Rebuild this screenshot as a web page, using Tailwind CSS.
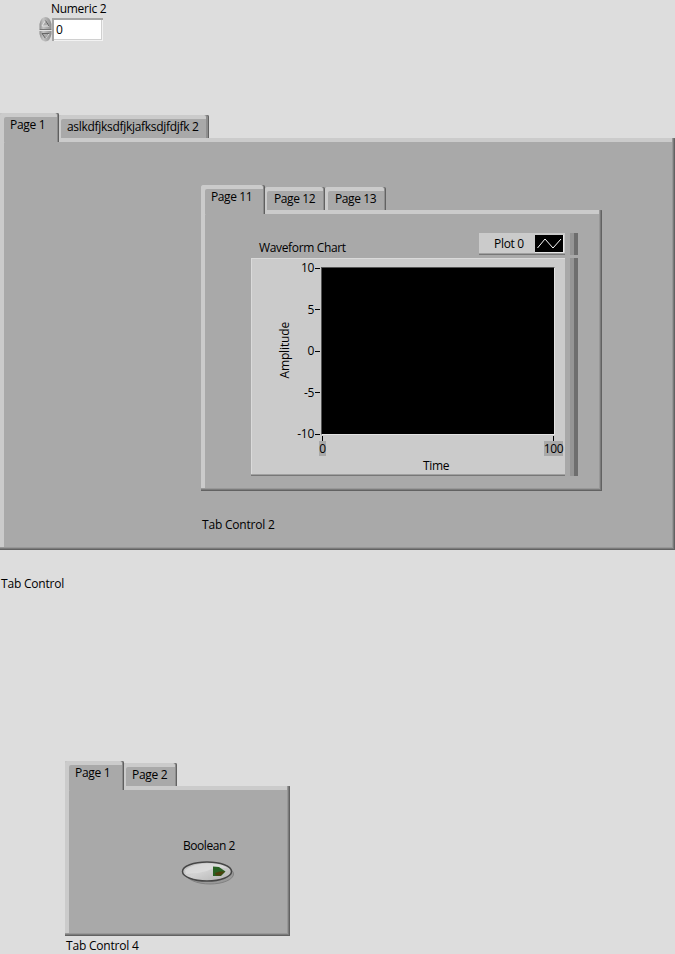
<!DOCTYPE html>
<html lang="en">
<head>
<meta charset="utf-8">
<title>Front Panel</title>
<script src="https://cdn.jsdelivr.net/npm/@tailwindcss/browser@4"></script>
</head>
<body class="w-[675px] h-[954px] overflow-hidden bg-[#dddddd] text-black text-[12px] leading-4 tracking-[-0.3px] whitespace-nowrap font-['Open_Sans','Noto_Sans',sans-serif]">

<!-- Numeric control -->
<section class="h-[113px] pl-[39px]">
  <div class="pl-3 pt-px h-[17px]">Numeric 2</div>
  <div class="flex h-[25px]">
    <svg class="w-[13px] h-[25px]" viewBox="0 0 13 25">
      <defs><linearGradient id="knob"><stop offset="0" stop-color="#8d8d8d"/><stop offset=".3" stop-color="#c4c4c4"/><stop offset=".65" stop-color="#a8a8a8"/><stop offset="1" stop-color="#8c8c8c"/></linearGradient></defs>
      <path d="M.5 12V7Q2 0 6.500 0Q11 0 12.500 7V12Z" fill="url(#knob)"/>
      <path d="M.5 14V17Q2 24.500 6.500 24.500Q11 24.500 12.500 17V14Z" fill="url(#knob)"/>
      <path d="M.5 12.500H12.500" stroke="#777"/><path d="M1 13.500H12.500" stroke="#e2e2e2"/>
      <path d="M3 9L6.500 3.500L10 9Z" fill="#aaa" stroke="#e4e4e4"/><path d="M6.500 3.500L10 9" stroke="#555"/>
      <path d="M3 16.500H10L6.500 21.500Z" fill="#aaa" stroke="#666"/><path d="M10 17L6.500 21.500" stroke="#e4e4e4"/>
    </svg>
    <div class="mt-px w-[51px] h-[23px] bg-white pl-[4px] pt-[4px] shadow-[inset_2px_2px_#a4a4a4,inset_-1px_-1px_#f2f2f2,inset_-2px_-2px_#d0d0d0]">0</div>
  </div>
</section>

<!-- Outer tab control -->
<section class="h-[436px]">
  <div class="flex h-[25px]">
    <div class="relative z-10 w-[59px] h-[29px] rounded-t-[2px] bg-[#a9a9a9] pl-[10px] pt-[4px] shadow-[inset_-1px_0_#5f5f5f,inset_-2px_0_#8c8c8c,inset_4px_4px_#cbcbcb]">Page 1</div>
    <div class="mt-[2px] w-[150px] h-[23px] rounded-t-[2px] bg-[#a9a9a9] pl-[8px] pt-[4px] shadow-[inset_-1px_0_#626262,inset_-3px_0_#8e8e8e,inset_2px_4px_#cbcbcb]">aslkdfjksdfjkjafksdjfdjfk 2</div>
  </div>
  <div class="h-[412px] rounded-t-[1px] bg-[#a9a9a9] pl-[201px] pt-[47px] shadow-[inset_-1px_-1px_#626262,inset_-2px_-2px_#7b7b7b,inset_-3px_-3px_#989898,inset_4px_4px_#cbcbcb]">

    <!-- Inner tab control -->
    <div class="flex h-[25px]">
      <div class="relative z-10 w-[64px] h-[29px] rounded-t-[2px] bg-[#a9a9a9] pl-[10px] pt-[4px] tracking-[-0.4px] shadow-[inset_-1px_0_#5f5f5f,inset_-2px_0_#8c8c8c,inset_4px_4px_#cbcbcb]">Page 11</div>
      <div class="mt-[2px] w-[60px] h-[23px] rounded-t-[2px] bg-[#a9a9a9] pl-[9px] pt-[4px] tracking-[-0.4px] shadow-[inset_-1px_0_#626262,inset_-2px_0_#8e8e8e,inset_2px_4px_#cbcbcb]">Page 12</div>
      <div class="mt-[2px] w-[61px] h-[23px] rounded-t-[2px] bg-[#a9a9a9] pl-[10px] pt-[4px] tracking-[-0.4px] shadow-[inset_-1px_0_#626262,inset_-2px_0_#8e8e8e,inset_3px_4px_#cbcbcb]">Page 13</div>
    </div>
    <div class="w-[401px] h-[281px] rounded-t-[1px] bg-[#a9a9a9] pl-[50px] pt-[23px] shadow-[inset_-1px_-1px_#626262,inset_-2px_-2px_#7b7b7b,inset_-3px_-3px_#989898,inset_4px_4px_#cbcbcb]">
      <div class="flex justify-between w-[327px] h-[25px]">
        <div class="pl-[8px] pt-[7px] tracking-[-0.35px]">Waveform Chart</div>
        <div class="flex w-[99px] h-[22px]">
          <div class="flex w-[86px] bg-[#cbcbcb] pl-[15px] shadow-[inset_0_-1px_#777,inset_0_-2px_#a0a0a0]">
            <span class="w-[41px] pt-[3px]">Plot 0</span>
            <svg class="mt-[2px] w-[29px] h-[18px]" viewBox="0 0 29 18"><path d="M0 0H28V17H0Z" fill="#000"/><path d="M28.500 0V17.500H0" fill="none" stroke="#e8e8e8"/><path d="M2.500 13L10 4L18 13L26 4" fill="none" stroke="#fff"/></svg>
          </div>
          <div class="w-[5px] bg-[#a8a8a8]"></div><div class="w-[4px] bg-[#959595]"></div><div class="w-[4px] bg-[#6e6e6e]"></div>
        </div>
      </div>

      <!-- Chart frame -->
      <div class="flex w-[327px] h-[218px]">
        <div class="w-[314px] bg-[#cbcbcb] pt-[9px] shadow-[inset_0_-1px_#777,inset_0_-2px_#a0a0a0,inset_1px_1px_#dadada]">
          <div class="flex h-[167px]">
            <div class="w-[42px] flex items-center justify-end"><span class="[writing-mode:vertical-rl] rotate-180 tracking-[-0.15px]">Amplitude</span></div>
            <div class="w-[27px] mr-px h-[182px] -mt-[7px] flex flex-col justify-between text-right">
              <div class="flex items-center justify-end gap-px"><span>10</span><i class="w-[5px] h-px bg-black"></i></div>
              <div class="flex items-center justify-end gap-px"><span>5</span><i class="w-[5px] h-px bg-black"></i></div>
              <div class="flex items-center justify-end gap-px"><span>0</span><i class="w-[5px] h-px bg-black"></i></div>
              <div class="flex items-center justify-end gap-px"><span>-5</span><i class="w-[5px] h-px bg-black"></i></div>
              <div class="flex items-center justify-end gap-px"><span>-10</span><i class="w-[5px] h-px bg-black"></i></div>
            </div>
            <div class="w-[234px] h-[168px] bg-black border border-t-[#555] border-l-[#555] border-r-[#e4e4e4] border-b-[#e4e4e4]"></div>
          </div>
          <div class="flex justify-between pl-[68px] pr-[2px] pt-[2px] h-[24px]">
            <div class="w-[7px] flex flex-col items-center"><i class="w-px h-[5px] bg-black"></i><span class="w-[7px] h-[15px] leading-[15px] bg-[#a9a9a9] flex justify-center">0</span></div>
            <div class="w-[19px] flex flex-col items-center"><i class="w-px h-[5px] bg-black"></i><span class="w-[19px] h-[15px] leading-[15px] bg-[#a9a9a9] flex justify-center">100</span></div>
          </div>
          <div class="pl-[172px]">Time</div>
        </div>
        <div class="w-[5px] bg-[#a8a8a8]"></div><div class="w-[4px] bg-[#959595]"></div><div class="w-[4px] bg-[#6e6e6e]"></div>
      </div>
    </div>
    <div class="pl-px pt-[26px] tracking-[-0.2px]">Tab Control 2</div>
  </div>
</section>

<div class="h-[212px] pt-[27px] pl-px tracking-[-0.2px]">Tab Control</div>

<!-- Lower tab control -->
<section class="pl-[65px]">
  <div class="flex h-[25px]">
    <div class="relative z-10 w-[59px] h-[29px] rounded-t-[2px] bg-[#a9a9a9] pl-[10px] pt-[4px] shadow-[inset_-1px_0_#5f5f5f,inset_-2px_0_#8c8c8c,inset_4px_4px_#cbcbcb]">Page 1</div>
    <div class="mt-[2px] w-[53px] h-[23px] rounded-t-[2px] bg-[#a9a9a9] pl-[8px] pt-[4px] shadow-[inset_-1px_0_#626262,inset_-2px_0_#8e8e8e,inset_2px_4px_#cbcbcb]">Page 2</div>
  </div>
  <div class="w-[225px] h-[150px] rounded-t-[1px] bg-[#a9a9a9] pl-[116px] pt-[52px] shadow-[inset_-1px_-1px_#626262,inset_-2px_-2px_#7b7b7b,inset_-3px_-3px_#989898,inset_4px_4px_#cbcbcb]">
    <div class="pl-[2px] h-[22px] tracking-[-0.45px]">Boolean 2</div>
    <svg class="w-[54px] h-[26px]" viewBox="0 0 54 26">
      <defs>
        <linearGradient id="cap" x1="0" y1="0" x2="1" y2="1"><stop offset="0" stop-color="#b5b5b5"/><stop offset=".45" stop-color="#d2d2d2"/><stop offset="1" stop-color="#b0b0b0"/></linearGradient>
      </defs>
      <ellipse cx="29" cy="14" rx="23.500" ry="10" fill="#999" stroke="#828282"/>
      <ellipse cx="26" cy="11.500" rx="24.500" ry="9.500" fill="url(#cap)" stroke="#464646" stroke-width="1.500"/>
      <path d="M4 10Q13 3 27 3.500Q39 3.500 46 8Q34 7 26 11Q16 14 5 14Z" fill="#dedede" opacity=".75"/>
      <path d="M32 6.500L38 7L44.500 11.500L40 16H32Z" fill="#286123"/>
      <path d="M34 13L39 11.500H44L39.500 15.500H35Z" fill="#4d3f0c"/>
    </svg>
  </div>
  <div class="pl-px pt-[2px] tracking-[-0.2px]">Tab Control 4</div>
</section>
</body>
</html>
